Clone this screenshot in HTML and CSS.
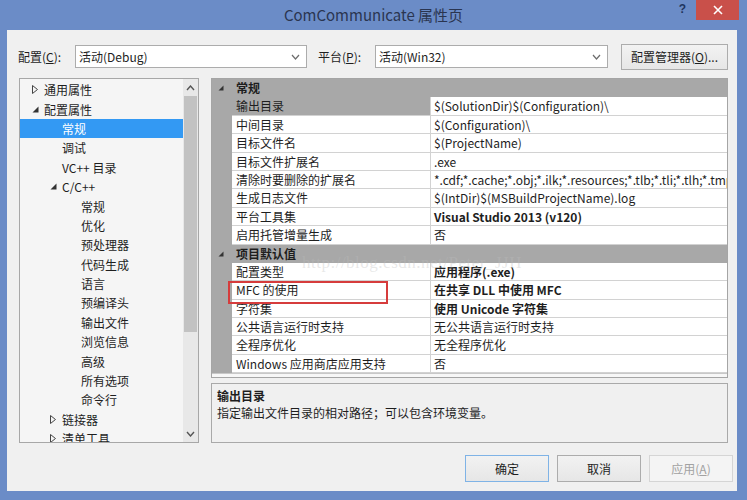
FILE: index.html
```html
<!DOCTYPE html>
<html lang="zh-CN">
<head>
    <meta charset="UTF-8">
    <title>ComCommunicate 属性页</title>
    <link rel="stylesheet" href="styles.css">
</head>
<body>

<div class="window">
    <div class="titlebar">
        <div></div>
        <div class="title">ComCommunicate 属性页</div>
        <div class="caption-btns">
            <span class="help">?</span>
            <span class="close">
                <svg width="10" height="10" viewBox="0 0 10 10"><path d="M1 1L9 9M9 1L1 9" stroke="#fff" stroke-width="1.6"/></svg>
            </span>
        </div>
    </div>

    <div class="client">
        <div class="toprow">
            <span class="lbl">配置(<u>C</u>):</span>
            <div class="combo combo-cfg">
                <span>活动(Debug)</span>
                <svg width="9" height="6" viewBox="0 0 9 6"><path d="M1 1L4.5 5L8 1" fill="none" stroke="#6d6d6d" stroke-width="1.2"/></svg>
            </div>
            <span class="lbl lbl2">平台(<u>P</u>):</span>
            <div class="combo combo-plat">
                <span>活动(Win32)</span>
                <svg width="9" height="6" viewBox="0 0 9 6"><path d="M1 1L4.5 5L8 1" fill="none" stroke="#6d6d6d" stroke-width="1.2"/></svg>
            </div>
            <button class="btn btn-mgr">配置管理器(<u>O</u>)...</button>
        </div>

        <div class="main">
            <div class="tree">
                <div class="tree-list">
                    <div class="node lv0"><span class="twist"><svg width="6" height="9" viewBox="0 0 6 9"><path d="M0.5 0.5L5.5 4.5L0.5 8.5Z" fill="none" stroke="#444" stroke-width="1"/></svg></span>通用属性</div>
                    <div class="node lv0"><span class="twist"><svg width="7" height="7" viewBox="0 0 7 7"><path d="M6.5 0.5L6.5 6.5L0.5 6.5Z" fill="#333"/></svg></span>配置属性</div>
                    <div class="node lv1 selected"><span class="twist"></span>常规</div>
                    <div class="node lv1"><span class="twist"></span>调试</div>
                    <div class="node lv1"><span class="twist"></span>VC++ 目录</div>
                    <div class="node lv1"><span class="twist"><svg width="7" height="7" viewBox="0 0 7 7"><path d="M6.5 0.5L6.5 6.5L0.5 6.5Z" fill="#333"/></svg></span>C/C++</div>
                    <div class="node lv2"><span class="twist"></span>常规</div>
                    <div class="node lv2"><span class="twist"></span>优化</div>
                    <div class="node lv2"><span class="twist"></span>预处理器</div>
                    <div class="node lv2"><span class="twist"></span>代码生成</div>
                    <div class="node lv2"><span class="twist"></span>语言</div>
                    <div class="node lv2"><span class="twist"></span>预编译头</div>
                    <div class="node lv2"><span class="twist"></span>输出文件</div>
                    <div class="node lv2"><span class="twist"></span>浏览信息</div>
                    <div class="node lv2"><span class="twist"></span>高级</div>
                    <div class="node lv2"><span class="twist"></span>所有选项</div>
                    <div class="node lv2"><span class="twist"></span>命令行</div>
                    <div class="node lv1"><span class="twist"><svg width="6" height="9" viewBox="0 0 6 9"><path d="M0.5 0.5L5.5 4.5L0.5 8.5Z" fill="none" stroke="#444" stroke-width="1"/></svg></span>链接器</div>
                    <div class="node lv1"><span class="twist"><svg width="6" height="9" viewBox="0 0 6 9"><path d="M0.5 0.5L5.5 4.5L0.5 8.5Z" fill="none" stroke="#444" stroke-width="1"/></svg></span>清单工具</div>
                </div>
                <div class="vscroll">
                    <span class="arrow"><svg width="9" height="6" viewBox="0 0 9 6"><path d="M1 5L4.5 1L8 5" fill="none" stroke="#555" stroke-width="1.4"/></svg></span>
                    <div class="track"><div class="thumb"></div></div>
                    <span class="arrow"><svg width="9" height="6" viewBox="0 0 9 6"><path d="M1 1L4.5 5L8 1" fill="none" stroke="#555" stroke-width="1.4"/></svg></span>
                </div>
            </div>

            <div class="right">
                <div class="grid">
                    <div class="row cat"><span class="gut"><svg width="6" height="6" viewBox="0 0 6 6"><path d="M5.5 0.5L5.5 5.5L0.5 5.5Z" fill="#333"/></svg></span><span class="cat-name">常规</span></div>
                    <div class="row sel"><span class="gut"></span><span class="name">输出目录</span><span class="val">$(SolutionDir)$(Configuration)\</span></div>
                    <div class="row"><span class="gut"></span><span class="name">中间目录</span><span class="val">$(Configuration)\</span></div>
                    <div class="row"><span class="gut"></span><span class="name">目标文件名</span><span class="val">$(ProjectName)</span></div>
                    <div class="row"><span class="gut"></span><span class="name">目标文件扩展名</span><span class="val">.exe</span></div>
                    <div class="row"><span class="gut"></span><span class="name">清除时要删除的扩展名</span><span class="val">*.cdf;*.cache;*.obj;*.ilk;*.resources;*.tlb;*.tli;*.tlh;*.tmp;</span></div>
                    <div class="row"><span class="gut"></span><span class="name">生成日志文件</span><span class="val">$(IntDir)$(MSBuildProjectName).log</span></div>
                    <div class="row"><span class="gut"></span><span class="name">平台工具集</span><span class="val bold">Visual Studio 2013 (v120)</span></div>
                    <div class="row"><span class="gut"></span><span class="name">启用托管增量生成</span><span class="val">否</span></div>
                    <div class="row cat"><span class="gut"><svg width="6" height="6" viewBox="0 0 6 6"><path d="M5.5 0.5L5.5 5.5L0.5 5.5Z" fill="#333"/></svg></span><span class="cat-name">项目默认值</span></div>
                    <div class="row"><span class="gut"></span><span class="name">配置类型</span><span class="val bold">应用程序(.exe)</span></div>
                    <div class="row"><span class="gut"></span><span class="name">MFC 的使用</span><span class="val bold">在共享 DLL 中使用 MFC</span></div>
                    <div class="row"><span class="gut"></span><span class="name">字符集</span><span class="val bold">使用 Unicode 字符集</span></div>
                    <div class="row"><span class="gut"></span><span class="name">公共语言运行时支持</span><span class="val">无公共语言运行时支持</span></div>
                    <div class="row"><span class="gut"></span><span class="name">全程序优化</span><span class="val">无全程序优化</span></div>
                    <div class="row"><span class="gut"></span><span class="name">Windows 应用商店应用支持</span><span class="val">否</span></div>
                    <div class="grid-rest"></div>

                    <div class="watermark">http://blog.csdn.net/Peter_JJH</div>
                    <div class="mark"></div>
                </div>
                <div class="desc">
                    <div class="desc-title">输出目录</div>
                    <div class="desc-text">指定输出文件目录的相对路径；可以包含环境变量。</div>
                </div>
            </div>
        </div>

        <div class="buttons">
            <button class="btn btn-ok">确定</button>
            <button class="btn">取消</button>
            <button class="btn btn-off">应用(<u>A</u>)</button>
        </div>
    </div>
</div>

</body>
</html>
```

FILE: styles.css
```css
body {
    margin: 0;
    font-family: "Noto Sans CJK SC", "Noto Sans", sans-serif;
    font-size: 12px;
    color: #1e1e1e;
    background-color: #6b8cc7;
}
.window {
    width: 747px;
    height: 500px;
    background-color: #6b8cc7;
    display: flex;
    flex-direction: column;
}
/* title bar */
.titlebar {
    height: 30px;
    display: grid;
    grid-template-columns: 1fr auto 1fr;
    align-items: start;
}
.title {
    font-size: 15px;
    line-height: 30px;
    color: #2a3550;
}
.caption-btns {
    display: flex;
    justify-content: flex-end;
    align-items: center;
    padding-right: 8px;
}
.help {
    font-family: "Liberation Sans", sans-serif;
    font-weight: bold;
    font-size: 12px;
    color: #1f3560;
    margin-right: 10px;
    margin-top: -2px;
}
.close {
    width: 43px;
    height: 20px;
    background-color: #c9504a;
    display: flex;
    justify-content: center;
    align-items: center;
}
.client {
    margin: 0 10px 0 7px;
    height: 461px;
    background-color: #f0f0f0;
    display: flex;
    flex-direction: column;
}
/* config row */
.toprow {
    display: flex;
    align-items: center;
    height: 27px;
    margin-top: 13px;
    padding-left: 11px;
}
.lbl {
    width: 57px;
    flex-shrink: 0;
}
.lbl2 {
    margin-left: 11px;
}
.combo {
    height: 23px;
    box-sizing: border-box;
    border: 1px solid #acacac;
    background-color: #fff;
    display: flex;
    align-items: center;
    justify-content: space-between;
    padding: 0 6px 0 3px;
}
.combo-cfg {
    width: 232px;
}
.combo-plat {
    width: 233px;
}
.btn {
    font-family: inherit;
    font-size: 12px;
    color: #1e1e1e;
    height: 27px;
    border: 1px solid #acacac;
    background: linear-gradient(#f2f2f2, #e6e6e6);
    padding: 0;
}
.btn-mgr {
    width: 107px;
    margin-left: 13px;
    height: 26px;
}
/* main area */
.main {
    display: flex;
    margin-top: 8px;
    height: 365px;
    padding-left: 12px;
}
.tree {
    width: 180px;
    box-sizing: border-box;
    border: 1px solid #a7a7a7;
    background-color: #f5f5f5;
    display: flex;
    overflow: hidden;
}
.tree-list {
    flex: 1;
    padding-top: 1px;
}
.node {
    height: 19.4px;
    display: flex;
    align-items: center;
    white-space: nowrap;
}
.node.lv0 { padding-left: 12px; }
.node.lv1 { padding-left: 30px; }
.node.lv2 { padding-left: 49px; }
.twist {
    width: 12px;
    display: flex;
    align-items: center;
}
.node.selected {
    background-color: #3399f3;
    color: #fff;
}
.vscroll {
    width: 15px;
    display: flex;
    flex-direction: column;
    background-color: #e8e8e8;
}
.vscroll .arrow {
    height: 17px;
    display: flex;
    justify-content: center;
    align-items: center;
}
.track {
    flex: 1;
}
.thumb {
    margin: 0 1px;
    height: 236px;
    background-color: #c2c2c2;
}
.right {
    width: 517px;
    margin-left: 12px;
    display: flex;
    flex-direction: column;
}
/* property grid */
.grid {
    position: relative;
    height: 300px;
    box-sizing: border-box;
    border: 1px solid #a5a5a5;
    background-color: #fff;
    display: flex;
    flex-direction: column;
    overflow: hidden;
}
.row {
    height: 18.4px;
    flex-shrink: 0;
    display: flex;
    white-space: nowrap;
}
.gut {
    width: 20px;
    flex-shrink: 0;
    background-color: #a8a8a8;
    display: flex;
    align-items: center;
    padding-left: 6px;
    box-sizing: border-box;
}
.name {
    width: 199px;
    flex-shrink: 0;
    box-sizing: border-box;
    padding-left: 4px;
    border-right: 1px solid #d2d2d2;
    border-bottom: 1px solid #d2d2d2;
    line-height: 17px;
}
.val {
    flex: 1;
    padding-left: 3px;
    border-bottom: 1px solid #d2d2d2;
    line-height: 17px;
    overflow: hidden;
}
.val.bold {
    font-weight: bold;
}
.row.sel .name {
    background-color: #a8a8a8;
}
.row.cat {
    background-color: #a8a8a8;
}
.cat-name {
    padding-left: 4px;
    font-weight: bold;
    line-height: 18px;
}
.grid-rest {
    flex: 1;
    border-top: 1px solid #c8c8c8;
    background-color: #f7f7f7;
}
.watermark {
    position: absolute;
    left: 90px;
    top: 174px;
    font-family: "Liberation Serif", serif;
    font-size: 17px;
    color: rgba(190, 190, 190, 0.35);
    letter-spacing: 0.5px;
}
.mark {
    position: absolute;
    left: 16px;
    top: 202px;
    width: 160px;
    height: 23px;
    box-sizing: border-box;
    border: 2px solid #d63c3c;
}
.desc {
    margin-top: 5px;
    height: 60px;
    box-sizing: border-box;
    border: 1px solid #a9a9a9;
    padding: 3px 5px;
    background-color: #f0f0f0;
}
.desc-title {
    font-weight: bold;
    line-height: 17px;
}
.desc-text {
    line-height: 18px;
}
/* dialog buttons */
.buttons {
    display: flex;
    justify-content: flex-end;
    gap: 8px;
    margin-top: 12px;
    padding-right: 4px;
}
.buttons .btn {
    width: 84px;
}
.btn-ok {
    border-color: #7fb3e6;
}
.btn-off {
    color: #a2a2a2;
    border-color: #d5d5d5;
    background: #f4f4f4;
}
```
